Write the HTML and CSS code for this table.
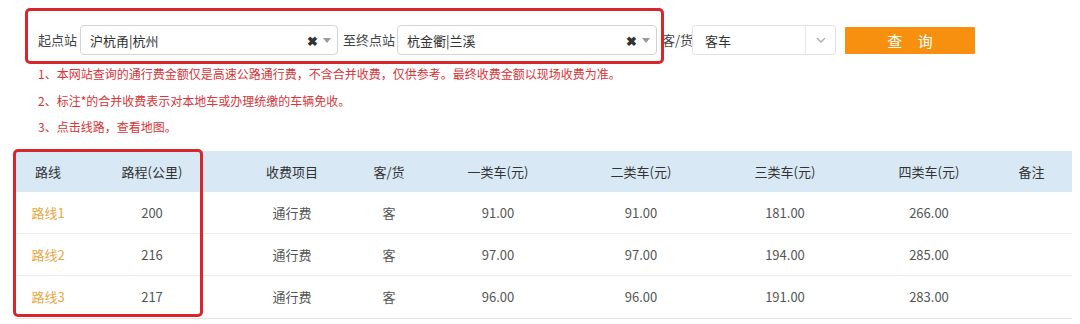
FILE: index.html
```html
<!DOCTYPE html>
<html lang="zh">
<head>
<meta charset="utf-8">
<link rel="stylesheet" href="styles.css">
</head>
<body>
<div class="page">
  <div class="search">
    <span class="lbl lbl-start">起点站</span>
    <div class="combo combo-start">
      <span class="combo-text">沪杭甬|杭州</span>
      <span class="clear">✖</span>
      <span class="caret"></span>
    </div>
    <span class="lbl lbl-end">至终点站</span>
    <div class="combo combo-end">
      <span class="combo-text">杭金衢|兰溪</span>
      <span class="clear">✖</span>
      <span class="caret"></span>
    </div>
    <span class="lbl lbl-type">客/货</span>
    <div class="select">
      <span class="select-text">客车</span>
      <span class="select-btn">
        <svg width="10" height="6" viewBox="0 0 10 6"><path d="M1 1 L5 5 L9 1" fill="none" stroke="#aaa" stroke-width="1.3"/></svg>
      </span>
    </div>
    <button class="query">查 询</button>
  </div>

  <div class="notes">
    <p>1、本网站查询的通行费金额仅是高速公路通行费，不含合并收费，仅供参考。最终收费金额以现场收费为准。</p>
    <p>2、标注*的合并收费表示对本地车或办理统缴的车辆免收。</p>
    <p>3、点击线路，查看地图。</p>
  </div>

  <div class="table">
    <div class="row head">
      <span>路线</span><span>路程(公里)</span><span>收费项目</span><span>客/货</span><span>一类车(元)</span><span>二类车(元)</span><span>三类车(元)</span><span>四类车(元)</span><span>备注</span>
    </div>
    <div class="row">
      <span class="route">路线1</span><span>200</span><span>通行费</span><span>客</span><span>91.00</span><span>91.00</span><span>181.00</span><span>266.00</span><span></span>
    </div>
    <div class="row">
      <span class="route">路线2</span><span>216</span><span>通行费</span><span>客</span><span>97.00</span><span>97.00</span><span>194.00</span><span>285.00</span><span></span>
    </div>
    <div class="row last">
      <span class="route">路线3</span><span>217</span><span>通行费</span><span>客</span><span>96.00</span><span>96.00</span><span>191.00</span><span>283.00</span><span></span>
    </div>
  </div>

  <div class="mark mark-search"></div>
  <div class="mark mark-table"></div>
</div>
</body>
</html>
```

FILE: styles.css
```css
* { box-sizing: border-box; }
html, body {
  margin: 0;
  padding: 0;
  background: #fff;
}
body {
  font-family: "Noto Sans CJK SC", "Noto Sans", sans-serif;
  color: #333;
  width: 1080px;
  height: 324px;
  overflow: hidden;
}
.page {
  position: relative;
  padding-top: 25px;
}
.search {
  display: flex;
  align-items: center;
  height: 30px;
  padding-left: 38px;
  font-size: 13px;
}
.lbl {
  color: #444;
  white-space: nowrap;
  line-height: 30px;
}
.lbl-start { width: 42px; }
.lbl-end { width: 54px; margin-left: 5px; }
.lbl-type { width: 30px; margin-left: 5px; }
.combo {
  display: flex;
  align-items: center;
  height: 30px;
  border: 1px solid #d4d4d4;
  border-radius: 4px;
  background: #fff;
  padding: 0 6px 0 9px;
}
.combo-start { width: 258px; }
.combo-end { width: 260px; }
.combo-text {
  flex: 1;
  color: #333;
  font-size: 13px;
}
.clear {
  font-size: 13px;
  color: #333;
  font-weight: bold;
  margin-right: 5px;
}
.caret {
  width: 0;
  height: 0;
  border-left: 4px solid transparent;
  border-right: 4px solid transparent;
  border-top: 5px solid #999;
}
.select {
  display: flex;
  align-items: center;
  width: 144px;
  height: 30px;
  border: 1px solid #e2e2e2;
  border-radius: 3px;
  background: #fff;
}
.select-text {
  flex: 1;
  padding-left: 12px;
  color: #333;
  font-size: 13px;
}
.select-btn {
  width: 30px;
  height: 28px;
  border-left: 1px solid #e6e6e6;
  display: flex;
  align-items: center;
  justify-content: center;
}
.query {
  margin-left: 9px;
  width: 130px;
  height: 27px;
  border: none;
  border-radius: 1px;
  background: #f7900f;
  color: #fff;
  font-family: inherit;
  font-size: 15px;
  letter-spacing: 6px;
  text-indent: 6px;
  padding: 0;
}
.notes {
  margin-top: 6px;
  padding-left: 38px;
  font-size: 12px;
  color: #d6353a;
}
.notes p {
  margin: 0;
  line-height: 26.5px;
  height: 26.5px;
}
.table {
  margin: 10px 0 0 15px;
  width: 1057px;
  border-bottom: 1px solid #e6e6e6;
  font-size: 13px;
}
.row {
  display: grid;
  grid-template-columns: 66px 142px 138px 56px 162px 124px 164px 124px 81px;
  height: 42px;
  align-items: center;
  text-align: center;
  color: #555;
  border-bottom: 1px solid #ececec;
}
.row.last { border-bottom: none; }
.row.head {
  height: 41px;
  background: #d9e8f5;
  color: #333;
  border-bottom: none;
}
.route { color: #e8a73f; }
.mark {
  position: absolute;
  border: 3px solid #d9262c;
  border-radius: 5px;
  pointer-events: none;
}
.mark-search {
  left: 25px;
  top: 8px;
  width: 639px;
  height: 56px;
}
.mark-table {
  left: 13px;
  top: 149px;
  width: 190px;
  height: 168px;
}
```
